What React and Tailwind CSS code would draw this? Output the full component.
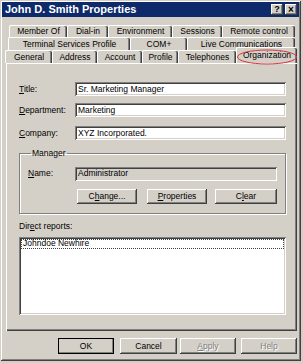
import React from 'react';

const raised =
  'shadow-[inset_-1px_-1px_0_#404040,inset_1px_1px_0_#ffffff,inset_-2px_-2px_0_#808080]';
const sunken =
  'shadow-[inset_1px_1px_0_#808080,inset_-1px_-1px_0_#ffffff,inset_2px_2px_0_#404040,inset_-2px_-2px_0_#d4d0c8]';

const Tab = ({ label, w, selected }) => (
  <div
    className={`flex items-center justify-center rounded-t-[2px] border-t border-l border-white bg-[#d4d0c8] shadow-[inset_-1px_0_0_#404040,inset_-2px_0_0_#808080] ${
      selected ? 'relative z-10 -mt-[2px] h-[16px]' : 'h-full'
    }`}
    style={{ width: w }}
  >
    {label}
  </div>
);

const Button = ({ children, className = '', disabled, def }) => (
  <div
    className={`flex items-center justify-center bg-[#d4d0c8] ${raised} ${
      def ? 'outline outline-1 outline-black -outline-offset-1' : ''
    } ${disabled ? 'text-[#808080] [text-shadow:1px_1px_0_#ffffff]' : ''} ${className}`}
  >
    {children}
  </div>
);

const Field = ({ label, value, className = '' }) => (
  <div className={`flex h-[14px] items-center ${className}`}>
    <div className="w-[56px]">{label}</div>
    <div className={`flex h-full w-[211px] items-center bg-white pl-[3px] ${sunken}`}>{value}</div>
  </div>
);

export default function App() {
  const row1 = [
    ['Member Of', 58],
    ['Dial-in', 41],
    ['Environment', 64],
    ['Sessions', 50],
    ['Remote control', 73],
  ];
  const row2 = [
    ['Terminal Services Profile', 122],
    ['COM+', 57],
    ['Live Communications', 108],
  ];
  const row3 = [
    ['General', 47],
    ['Address', 45],
    ['Account', 45],
    ['Profile', 36],
    ['Telephones', 58],
  ];

  return (
    <div className="relative h-[363px] w-[303px] overflow-hidden bg-[#d4d0c8] font-['Liberation_Sans',Arial,sans-serif] text-[8.5px] leading-none text-black">
      <div className="flex h-[361px] w-[301px] flex-col shadow-[inset_1px_1px_0_#d4d0c8,inset_-1px_-1px_0_#404040,inset_2px_2px_0_#ffffff,inset_-2px_-2px_0_#808080]">
        {/* title bar */}
        <div className="mx-[2px] mt-[2px] flex h-[15px] items-center justify-between bg-[#0e2a6a] pl-[3px] pr-[2px]">
          <span className="text-[11px] font-bold text-white">John D. Smith Properties</span>
          <div className="flex gap-[2px]">
            <div className={`flex h-[11px] w-[12px] items-center justify-center bg-[#d4d0c8] text-[9px] font-bold ${raised}`}>?</div>
            <div className={`flex h-[11px] w-[12px] items-center justify-center bg-[#d4d0c8] text-[10px] font-bold ${raised}`}>×</div>
          </div>
        </div>

        {/* tabs */}
        <div className="mt-[8px] flex flex-col">
          <div className="ml-[9px] flex h-[12px]">
            {row1.map(([l, w]) => (
              <Tab key={l} label={l} w={w} />
            ))}
          </div>
          <div className="ml-[8px] flex h-[13px]">
            {row2.map(([l, w]) => (
              <Tab key={l} label={l} w={w} />
            ))}
          </div>
          <div className="relative ml-[5px] flex h-[13px] items-end">
            {row3.map(([l, w]) => (
              <Tab key={l} label={l} w={w} />
            ))}
            <Tab label="Organization" w={61} selected />
            <svg className="absolute left-[231px] top-[-1px] z-20" width="62" height="16" viewBox="0 0 62 16">
              <ellipse cx="31" cy="8" rx="29.5" ry="7" fill="none" stroke="#d8343c" strokeWidth="1" />
            </svg>
          </div>
        </div>

        {/* panel */}
        <div className="ml-[6px] flex h-[268px] w-[291px] flex-col border-t border-l border-white pl-[12px] shadow-[inset_-1px_-1px_0_#404040,inset_-2px_-2px_0_#808080]">
          <Field
            className="mt-[18px]"
            label={
              <span>
                <u>T</u>itle:
              </span>
            }
            value="Sr. Marketing Manager"
          />
          <Field
            className="mt-[7px]"
            label={
              <span>
                <u>D</u>epartment:
              </span>
            }
            value="Marketing"
          />
          <Field
            className="mt-[9px]"
            label={
              <span>
                <u>C</u>ompany:
              </span>
            }
            value="XYZ Incorporated."
          />

          <fieldset className="mt-[9px] h-[65px] w-[267px] border border-[#808080] pl-[8px] shadow-[1px_1px_0_#ffffff,inset_1px_1px_0_#ffffff]">
            <legend className="ml-[3px] px-[1px]">Manager</legend>
            <div className="mt-[9px] flex h-[14px] items-center">
              <div className="w-[47px]">
                <u>N</u>ame:
              </div>
              <div className={`flex h-full w-[202px] items-center bg-[#d4d0c8] pl-[3px] ${sunken}`}>Administrator</div>
            </div>
            <div className="mt-[8px] flex h-[15px] pl-[49px]">
              <Button className="w-[60px]">
                <span>
                  C<u>h</u>ange...
                </span>
              </Button>
              <Button className="ml-[10px] w-[60px]">
                <span>
                  <u>P</u>roperties
                </span>
              </Button>
              <Button className="ml-[8px] w-[62px]">
                <span>
                  C<u>l</u>ear
                </span>
              </Button>
            </div>
          </fieldset>

          <div className="mt-[8px]">
            Dir<u>e</u>ct reports:
          </div>
          <div className={`mt-[6px] h-[78px] w-[267px] bg-white p-[2px] ${sunken}`}>
            <div className="flex h-[10px] items-center border border-dotted border-[#404040] pl-[1px]">Johndoe Newhire</div>
          </div>
        </div>

        {/* dialog buttons */}
        <div className="mt-[7px] flex h-[16px] pl-[58px]">
          <Button def className="w-[56px]">OK</Button>
          <Button className="ml-[6px] w-[57px]">Cancel</Button>
          <Button disabled className="ml-[3px] w-[56px]">
            <span>
              <u>A</u>pply
            </span>
          </Button>
          <Button disabled className="ml-[5px] w-[56px]">Help</Button>
        </div>
      </div>
    </div>
  );
}
